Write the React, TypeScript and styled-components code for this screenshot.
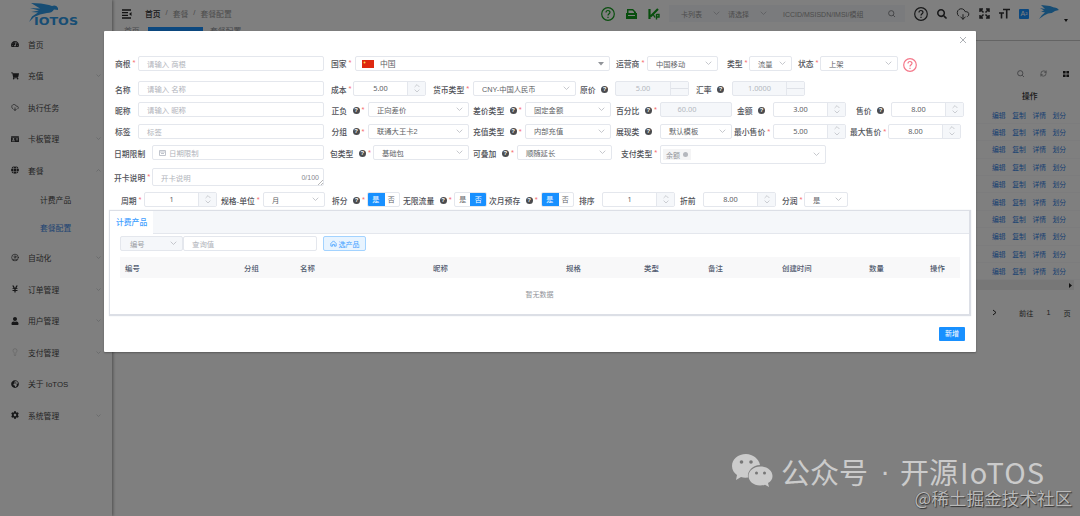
import React from "react";
import styled, { createGlobalStyle, css } from "styled-components";
import {
  FaTachometerAlt, FaShoppingCart, FaIdCard, FaYenSign, FaUser, FaGlobeAfrica, FaCog,
  FaSearch, FaGlobe,
} from "react-icons/fa";
import { CloudDownload, Lightbulb, RefreshCw, CircleUser } from "lucide-react";

const Global = createGlobalStyle`
  * { box-sizing: border-box; }
  body {
    margin: 0; width: 1080px; height: 516px; overflow: hidden; background: #fff;
    font-family: "Liberation Sans", "Noto Sans CJK SC", sans-serif; font-size: 7.8px; color: #303133;
  }
`;

const Page = styled.div`position: relative; display: flex; width: 1080px; height: 516px; overflow: hidden;`;

/* ---------- sidebar ---------- */
const Sidebar = styled.aside`
  width: 112px; height: 516px; flex: none; background: #fff; box-shadow: 1px 0 3px rgba(0, 0, 0, 0.4);
`;
const LogoBox = styled.div`height: 28.5px; padding: 1px 0 0 27px;`;
const MenuItem = styled.div`
  display: flex; align-items: center; height: 31.5px; padding: 0 11px; color: #484848;
  & > span { flex: 1; margin-left: 9px; white-space: nowrap; }
`;
const MenuIcon = styled.i<{ $faint?: boolean }>`
  display: flex; width: 8px; color: ${(p) => (p.$faint ? "#c4c4c4" : "#303133")};
`;
const SubItem = styled.div<{ $active?: boolean }>`
  height: 28px; line-height: 29px; padding-left: 40px; color: ${(p) => (p.$active ? "#3f88e6" : "#484848")};
`;

/* ---------- page behind the dialog ---------- */
const Main = styled.main`flex: 1; min-width: 0;`;
const TopBar = styled.header`display: flex; align-items: center; height: 27px; padding-left: 9px;`;
const Crumbs = styled.div`
  display: flex; gap: 5px; width: 456px; margin-left: 13px; color: #999; white-space: nowrap;
  & b { font-weight: 500; color: #303133; }
`;
const GreenIcons = styled.div`display: flex; align-items: center; gap: 11px; width: 68px; color: #119c1c;`;
const SearchGroup = styled.div`
  display: flex; align-items: center; width: 236px; height: 17px; background: #f5f7fa; color: #999;
  font-size: 7px; white-space: nowrap; overflow: hidden;
`;
const SearchPart = styled.span<{ $w: number; $l: number; $r: number }>`
  display: flex; align-items: center; justify-content: space-between; width: ${(p) => p.$w}px;
  padding: 0 ${(p) => p.$r}px 0 ${(p) => p.$l}px;
`;
const Tools = styled.div`
  display: flex; align-items: center; gap: 9px; margin-left: 9px; color: #303133;
  & > :nth-child(7) { margin: -4px 0 0 1px; }
  & > :nth-child(8) { margin: 13px 0 0 -4px; }
`;
const Translate = styled.span`
  width: 10px; height: 10px; border-radius: 1px; background: #1890ff; color: #fff; font-size: 7px; line-height: 10px; text-align: center;
`;
const PageTabs = styled.div`
  display: flex; height: 13.5px; border-bottom: 1px solid #c9c9c9; color: #909399; line-height: 9px;
  & span { width: 36px; padding-left: 12px; white-space: nowrap; }
  & b + span { padding-left: 7px; }
  & b { width: 55px; background: #1890ff; }
`;
const ListPanel = styled.section`width: 104px; margin-left: auto; padding-top: 27px;`;
const ListTools = styled.div`
  display: flex; justify-content: flex-end; gap: 16px; height: 12px; padding-right: 11px; align-items: center; color: #606266;
`;
const ListHead = styled.div`height: 27px; padding: 12px 0 0 46px; line-height: 10px; font-weight: 500;`;
const LinkRow = styled.div`
  display: flex; gap: 6.6px; height: 17.4px; align-items: center; padding-left: 16px; border-bottom: 1px solid #f8f9fb;
  color: #2f80e4; font-size: 6.8px; white-space: nowrap;
`;
const ScrollBar = styled.div`
  display: flex; align-items: center; justify-content: flex-end; height: 10px; margin-right: 6px; padding-right: 2px; background: #efefef;
`;
const Pager = styled.div`
  display: flex; align-items: center; height: 45px; padding-left: 16px; font-size: 7.2px; color: #404040;
  & span:nth-child(2) { margin-left: 22px; }
  & span:nth-child(3) { margin-left: 13px; }
  & span:nth-child(4) { margin-left: 13px; }
`;

/* ---------- dialog ---------- */
const Mask = styled.div`position: absolute; inset: 0; background: rgba(0, 0, 0, 0.5); padding: 31px 0 0 104px;`;
const Dialog = styled.div`
  width: 872px; height: 321px; background: #fff; border-radius: 1px; color: #303133; box-shadow: 0 1px 2px rgba(0, 0, 0, 0.3);
`;
const DialogTop = styled.div`display: flex; justify-content: flex-end; height: 22px; padding: 5px 9px 0 0;`;
const Row = styled.div<{ $h: number }>`display: flex; align-items: flex-start; height: ${(p) => p.$h}px;`;
const Field = styled.div<{ $gap: number }>`display: flex; flex: none; margin-left: ${(p) => p.$gap}px;`;
const Label = styled.label<{ $w: number }>`
  display: flex; align-items: center; flex: none; width: ${(p) => p.$w}px; height: 16px;
  font-weight: 500; color: #505258; white-space: nowrap;
`;
const TopRow = styled(Row)`
  & ${Label} { height: 20px; }
`;
const NoteRow = styled(Row)`
  & ${Label} { height: 18px; }
`;
const Star = styled.sup`margin-left: 2px; font-size: 7.5px; line-height: 6px; color: #f56c6c; vertical-align: baseline;`;
const Tip = styled.span`
  width: 7px; height: 7px; margin-left: 5.5px; border-radius: 50%; background: #4a4b4e; color: #fff;
  font: bold 6px/7px "Liberation Sans", sans-serif; text-align: center;
`;
const box = css`border: 1px solid #e4e7ed; border-radius: 2px; background: #fff;`;
const Input = styled.div<{ $w: number; $h?: number; $pad?: number }>`
  ${box}
  display: flex; align-items: center; gap: 3px; width: ${(p) => p.$w}px; height: ${(p) => p.$h ?? 15}px;
  padding-left: ${(p) => p.$pad ?? 8}px; color: #b0b3ba; font-size: 7.4px;
`;
const Select = styled.div<{ $w: number; $h?: number; $pad?: number; $off?: boolean }>`
  ${box}
  display: flex; align-items: center; justify-content: space-between; width: ${(p) => p.$w}px; height: ${(p) => p.$h ?? 15}px;
  padding: 0 5px 0 ${(p) => p.$pad ?? 8}px; color: #606266; font-size: 7.3px; white-space: nowrap;
  ${(p) => p.$off && css`background: #f5f7fa; color: #9a9da4;`}
`;
const NumberBox = styled.div<{ $w: number; $off?: boolean }>`
  ${box}
  display: flex; width: ${(p) => p.$w}px; height: 15px; color: ${(p) => (p.$off ? "#b4b8c0" : "#606266")};
  font: 7.4px/13px "Noto Sans", sans-serif; text-align: center; background: ${(p) => (p.$off ? "#f5f7fa" : "#fff")};
  & > span { flex: 1; }
`;
const Steps = styled.div<{ $off?: boolean }>`
  display: flex; flex-direction: column; align-items: center; justify-content: space-evenly; width: 18px;
  border-left: 1px solid #e4e7ed;
  background: ${(p) => (p.$off ? "linear-gradient(#f5f7fa 46%, #dfe2e8 46%, #dfe2e8 54%, #f5f7fa 54%)" : "#f5f7fa")};
`;
const Blank = styled.div`width: 18px;`;
const Toggle = styled.div`
  ${box}
  display: flex; width: 33px; height: 15px; overflow: hidden; font-size: 7px; line-height: 13px; text-align: center;
`;
const Choice = styled.span<{ $on?: boolean }>`
  flex: 1; margin: -1px; padding-top: 1px; color: ${(p) => (p.$on ? "#fff" : "#606266")}; background: ${(p) => (p.$on ? "#1890ff" : "transparent")};
`;
const Area = styled(Input)`
  position: relative; justify-content: space-between; padding-right: 4px;
  & em { font: 7px "Liberation Sans", sans-serif; color: #85888e; }
  & svg { position: absolute; right: 0; bottom: 0; }
`;
const Tag = styled.span`
  display: flex; align-items: center; gap: 3px; height: 11px; padding: 0 3px; background: #f4f4f5; color: #909399; font-size: 7px;
  & i { width: 5px; height: 5px; border-radius: 50%; background: #b4b7bd; }
`;
const Country = styled.span`display: flex; align-items: center; gap: 6px; font-size: 7.8px;`;
const Lowered = styled.div`padding-top: 3px;`;
const RedHelp = styled.div`margin: 5px 0 0 5px; color: #f4788a;`;

const Card = styled.section`
  width: 862px; height: 106px; margin-left: 5px; border: 1px solid #dcdfe6; border-width: 1px 2px 2px 1px; box-shadow: 0 0 1px #dcdfe6;
`;
const CardTabs = styled.div`
  height: 23px; background: #f5f7fa; border-bottom: 1px solid #e4e7ed;
  & span { display: block; width: 43px; height: 23px; padding-left: 6px; line-height: 23px; background: #fff; color: #409eff; font-weight: 500; }
`;
const Filter = styled.div`display: flex; padding: 2px 0 0 10px;`;
const Pick = styled.button`
  display: flex; align-items: center; justify-content: center; gap: 2px; width: 43px; height: 15px; margin-left: 6px; padding: 0;
  border: 1px solid #a3d3ff; border-radius: 2px; background: #e8f4ff; color: #409eff; font: inherit; font-size: 7px; white-space: nowrap;
`;
const TableHead = styled.div`
  display: grid; grid-template-columns: 119px 56px 133px 133px 78px 64px 74px 87px 61px 30px; align-items: center;
  width: 840px; height: 21px; margin: 6px 0 0 10px; padding-left: 5px; background: #f8f8f9; color: #515a6e;
  font-weight: 500; font-size: 7.4px;
`;
const Empty = styled.div`padding-top: 10px; text-align: center; font-size: 7px; line-height: 14px; color: #909399;`;
const Foot = styled.footer`display: flex; justify-content: flex-end; padding: 11px 11px 0 0;`;
const Submit = styled.button`
  width: 26px; height: 14px; padding: 0; border: 0; border-radius: 1px; background: #1890ff; color: #fff; font: inherit; font-size: 7px; line-height: 14px;
`;

/* ---------- watermark ---------- */
const Brand = styled.div`
  position: absolute; left: 732px; top: 451px; display: flex; align-items: center; color: #cbcbcb;
  font: 29px/40px "Noto Sans CJK SC", sans-serif; white-space: nowrap;
  & > svg { margin-right: 8px; }
  & i { width: 34px; text-align: center; font-style: normal; font-family: "Liberation Sans", sans-serif; margin-right: -2px; }
  & b { margin-left: 2px; font-weight: 400; letter-spacing: 1.1px; }
`;
const Credit = styled.div`
  position: absolute; right: 8px; top: 486px; color: #b9b9b9; font: 17.6px/24px "Noto Sans CJK SC", sans-serif;
  text-shadow: 1px 1px 1px #333, -0.5px -0.5px 0 #555; white-space: nowrap;
`;

const Chev = ({ up, s = 7 }: { up?: boolean; s?: number }) => (
  <svg width={s} height={s * 0.6} viewBox="0 0 10 6" fill="none" stroke="#b4b7bd" strokeWidth="1.1">
    <path d={up ? "M1 5L5 1L9 5" : "M1 1L5 5L9 1"} />
  </svg>
);
const Help = ({ s }: { s: number }) => (
  <svg width={s} height={s} viewBox="0 0 14 14" fill="none" stroke="currentColor" strokeWidth="1.2">
    <circle cx="7" cy="7" r="6.3" />
    <path d="M5 5.500C5 2.800 9 2.900 9 5.300C9 6.800 7 6.700 7 8.600M7 9.700V11" />
  </svg>
);
const Bird = () => (
  <svg width="20" height="15" viewBox="0 0 20 15" fill="#2f9ae8">
    <path d="M2 1L11 2L15 3.500Q18 3 20 6L16 7Q13 9.500 9 9.500L5 11.500L0 15L3 11L6 8.500L2 7.500L5 6.500L1 4L6 5Z" />
  </svg>
);
const Logo = () => (
  <svg width="54" height="26" viewBox="0 0 54 26">
    <path fill="#2f9ae8" d="M4 2L14 2.500L22 4L25 5Q29 3.500 31 7L31 9L27 8.500Q25 12 20 12L13 13.500L7 16L2 21L5 15.500L11 11.500L4 11L12 9.500L3 7L13 7.500Z" />
    <text x="7" y="24" fill="#2f9ae8" fontFamily="DejaVu Sans" fontWeight="bold" fontSize="10" textLength="44" lengthAdjust="spacingAndGlyphs">IOTOS</text>
  </svg>
);
const Lens = () => (
  <svg width="7" height="7" viewBox="0 0 8 8" fill="none" stroke="#707276" strokeWidth=".9"><circle cx="3.700" cy="3.700" r="3" /><path d="M6 6L8 8" /></svg>
);

const MENU: { t: string; icon: React.ReactNode; sub?: string[]; arrow?: boolean; faint?: boolean }[] = [
  { t: "首页", icon: <FaTachometerAlt size={8} /> },
  { t: "充值", icon: <FaShoppingCart size={8} />, arrow: true },
  { t: "执行任务", icon: <CloudDownload size={9} /> },
  { t: "卡板管理", icon: <FaIdCard size={8} />, arrow: true },
  { t: "套餐", icon: <FaGlobe size={8} />, arrow: true, sub: ["计费产品", "套餐配置"] },
  { t: "自动化", icon: <CircleUser size={9} />, arrow: true },
  { t: "订单管理", icon: <FaYenSign size={8} />, arrow: true },
  { t: "用户管理", icon: <FaUser size={8} />, arrow: true },
  { t: "支付管理", icon: <Lightbulb size={8} />, arrow: true, faint: true },
  { t: "关于 IoTOS", icon: <FaGlobeAfrica size={8} /> },
  { t: "系统管理", icon: <FaCog size={8} />, arrow: true },
];

type FProps = { gap: number; lw: number; label: string; tip?: boolean; req?: boolean; children: React.ReactNode };
const F = ({ gap, lw, label, tip, req, children }: FProps) => (
  <Field $gap={gap}>
    <Label $w={lw}>{label}{tip && <Tip>?</Tip>}{req && <Star>*</Star>}</Label>
    {children}
  </Field>
);
const Num = ({ w = 73, v, off, plain }: { w?: number; v: string; off?: boolean; plain?: boolean }) => (
  <NumberBox $w={w} $off={off}>
    <span>{v}</span>
    {plain ? <Blank /> : <Steps $off={off}>{!off && <><Chev up s={6} /><Chev s={6} /></>}</Steps>}
  </NumberBox>
);
const Sel = ({ w, v, pad }: { w: number; v: string; pad?: number }) => <Select $w={w} $pad={pad}>{v}<Chev /></Select>;
const YesNo = ({ yes }: { yes?: boolean }) => <Toggle><Choice $on={yes}>是</Choice><Choice $on={!yes}>否</Choice></Toggle>;

export default function App() {
  return (
    <Page>
      <Global />
      <Sidebar>
        <LogoBox><Logo /></LogoBox>
        {MENU.map((m) => (
          <React.Fragment key={m.t}>
            <MenuItem>
              <MenuIcon $faint={m.faint}>{m.icon}</MenuIcon>
              <span>{m.t}</span>
              {m.arrow && <Chev up={!!m.sub} s={5} />}
            </MenuItem>
            {m.sub?.map((s, i) => <SubItem key={s} $active={i === 1}>{s}</SubItem>)}
          </React.Fragment>
        ))}
      </Sidebar>
      <Main>
        <TopBar>
          <svg width="11" height="10" viewBox="0 0 11 10" fill="none" stroke="#222" strokeWidth="1.3">
            <path d="M1 1H10M1 3.700H7M1 6.300H7M1 9H10" /><path fill="#222" stroke="none" d="M10.500 3V7L8 5Z" />
          </svg>
          <Crumbs><b>首页</b><span>/</span><span>套餐</span><span>/</span><span>套餐配置</span></Crumbs>
          <GreenIcons>
            <Help s={14} />
            <svg width="11" height="12" viewBox="0 0 11 12" fill="currentColor"><path fillRule="evenodd" d="M1 1H7L10 4V5H11V11H0V5H1ZM2.500 2.500V5H8V4L6.500 2.500ZM2 7V8H9V7Z" /></svg>
            <svg width="12" height="12" viewBox="0 0 12 12" fill="none" stroke="currentColor" strokeWidth="2.200"><path d="M1.500 1V11M10 1L2.500 8.500" /><path strokeWidth="1.400" d="M5 6L7 9.500M8.500 6V11.500M8.500 6.500H11V9H8.500" /></svg>
          </GreenIcons>
          <SearchGroup>
            <SearchPart $w={54} $l={12} $r={3}>卡列表<Chev /></SearchPart>
            <SearchPart $w={47} $l={5} $r={3}>请选择<Chev /></SearchPart>
            <SearchPart $w={135} $l={13} $r={10}>ICCID/MSISDN/IMSI/模组<Lens /></SearchPart>
          </SearchGroup>
          <Tools>
            <Help s={14} />
            <FaSearch size={10} />
            <CloudDownload size={14} strokeWidth={1.6} />
            <svg width="11" height="11" viewBox="0 0 11 11" fill="none" stroke="currentColor" strokeWidth="1.5"><path d="M1 4V1H4M1 1L4.500 4.500M7 1H10V4M10 1L6.500 4.500M1 7V10H4M1 10L4.500 6.500M10 7V10H7M10 10L6.500 6.500" /></svg>
            <svg width="11" height="11" viewBox="0 0 11 11" fill="none" stroke="currentColor" strokeWidth="1.6"><path d="M4 1.500H11M7.700 1.500V10.500M0 5H5M2.500 5V10.500" /></svg>
            <Translate>A²</Translate>
            <Bird />
            <svg width="4" height="3"><path d="M0 0H4L2 3Z" fill="#222" /></svg>
          </Tools>
        </TopBar>
        <PageTabs><span>首页</span><b /><span>套餐配置</span></PageTabs>
        <ListPanel>
          <ListTools>
            <Lens />
            <RefreshCw size={7} />
            <svg width="6" height="6" fill="#222"><path d="M0 0H2.600V2.600H0ZM3.400 0H6V2.600H3.400ZM0 3.400H2.600V6H0ZM3.400 3.400H6V6H3.400Z" /></svg>
          </ListTools>
          <ListHead>操作</ListHead>
          {Array.from({ length: 10 }, (_, i) => (
            <LinkRow key={i}><span>编辑</span><span>复制</span><span>详情</span><span>划分</span></LinkRow>
          ))}
          <ScrollBar><svg width="3" height="5"><path d="M0 0L3 2.500L0 5Z" fill="#222" /></svg></ScrollBar>
          <Pager>
            <svg width="5" height="7" fill="none" stroke="#222"><path d="M1 1L4 3.500L1 6" /></svg>
            <span>前往</span><span>1</span><span>页</span>
          </Pager>
        </ListPanel>
      </Main>

      <Mask>
        <Dialog>
          <DialogTop><svg width="8" height="8" viewBox="0 0 8 8" stroke="#a4a7ad" strokeWidth=".9"><path d="M1 1L7 7M7 1L1 7" /></svg></DialogTop>
          <TopRow $h={28}>
            <F gap={11} lw={23} label="商根" req><Lowered><Input $w={186}>请输入 商根</Input></Lowered></F>
            <F gap={7} lw={24} label="国家" req>
              <Lowered>
                <Select $w={255} $pad={6}>
                  <Country>
                    <svg width="12" height="8"><rect width="12" height="8" fill="#de2910" /><circle cx="2.500" cy="2.500" r="1" fill="#ffd84a" /></svg>中国
                  </Country>
                  <svg width="6" height="4"><path d="M0 0H6L3 3.500Z" fill="#909398" /></svg>
                </Select>
              </Lowered>
            </F>
            <F gap={6} lw={31} label="运营商" req><Lowered><Sel w={71} v="中国移动" /></Lowered></F>
            <F gap={9} lw={22} label="类型" req><Lowered><Sel w={43} v="流量" /></Lowered></F>
            <F gap={6} lw={22} label="状态" req><Lowered><Sel w={78} v="上架" /></Lowered></F>
            <RedHelp><Help s={14} /></RedHelp>
          </TopRow>
          <Row $h={21}>
            <F gap={11} lw={23} label="名称"><Input $w={186}>请输入 名称</Input></F>
            <F gap={7} lw={22} label="成本" req><Num v="5.00" /></F>
            <F gap={7} lw={40} label="货币类型" req><Sel w={103} v="CNY-中国人民币" /></F>
            <F gap={4} lw={35} label="原价" tip><Num w={74} v="5.00" off /></F>
            <F gap={7} lw={36} label="汇率" tip><Num v="1.0000" off /></F>
          </Row>
          <Row $h={21.5}>
            <F gap={11} lw={23} label="昵称"><Input $w={186}>请输入 昵称</Input></F>
            <F gap={7.5} lw={36.5} label="正负" tip req><Sel w={101} v="正向差价" /></F>
            <F gap={4} lw={52} label="差价类型" tip req><Sel w={86} v="固定金额" /></F>
            <F gap={5} lw={44} label="百分比" tip req><Num w={72} v="60.00" off plain /></F>
            <F gap={5} lw={36} label="金额" tip><Num v="3.00" /></F>
            <F gap={10} lw={35} label="售价" tip><Num v="8.00" /></F>
          </Row>
          <Row $h={21.5}>
            <F gap={11} lw={23} label="标签"><Input $w={186}>标签</Input></F>
            <F gap={7.5} lw={36.5} label="分组" tip req><Sel w={101} v="联通大王卡2" /></F>
            <F gap={4} lw={52} label="充值类型" tip req><Sel w={86} v="内部充值" /></F>
            <F gap={5} lw={44} label="展现类" tip><Sel w={72} v="默认模板" /></F>
            <F gap={2} lw={39} label="最小售价" req><Num v="5.00" /></F>
            <F gap={4} lw={38} label="最大售价" req><Num v="8.00" /></F>
          </Row>
          <Row $h={23}>
            <F gap={10} lw={38} label="日期限制">
              <Input $w={172} $pad={6}>
                <svg width="7" height="7" fill="none" stroke="#c0c4cc"><path d="M.500 1.500H6.500V6.500H.500ZM0 3H7M2 4.500H5" /></svg>日期限制
              </Input>
            </F>
            <F gap={6} lw={43} label="包类型" tip req><Sel w={96} v="基础包" /></F>
            <F gap={4} lw={44} label="可叠加" tip req><Sel w={95} v="顺随延长" /></F>
            <F gap={9} lw={39} label="支付类型" req><Select $w={166} $h={19} $pad={2}><Tag>余额<i /></Tag><Chev /></Select></F>
          </Row>
          <NoteRow $h={24}>
            <F gap={10} lw={38} label="开卡说明" req>
              <Area $w={172} $h={18}><span>开卡说明</span><em>0/100</em>
                <svg width="5" height="5" stroke="#999" strokeWidth=".7"><path d="M0 5L5 0M3 5L5 3" /></svg>
              </Area>
            </F>
          </NoteRow>
          <Row $h={18}>
            <F gap={17} lw={23} label="周期" req><Num v="1" /></F>
            <F gap={4} lw={42} label="规格-单位" req><Sel w={62} v="月" /></F>
            <F gap={7} lw={35} label="拆分" tip req><YesNo yes /></F>
            <F gap={3} lw={51} label="无限流量" tip req><YesNo /></F>
            <F gap={2} lw={52} label="次月预存" tip req><YesNo yes /></F>
            <F gap={5} lw={23} label="排序"><Num v="1" /></F>
            <F gap={5} lw={23} label="折前"><Num v="8.00" /></F>
            <F gap={6} lw={22} label="分润" req><Sel w={44} v="是" /></F>
          </Row>
          <Card>
            <CardTabs><span>计费产品</span></CardTabs>
            <Filter>
              <Select $w={63} $off $pad={9}>编号<Chev /></Select>
              <Input $w={134} $pad={8}>查询值</Input>
              <Pick><svg width="7" height="7" viewBox="0 0 8 8" fill="none" stroke="#409eff" strokeWidth=".9"><path d="M1 7V4L4 1L7 4V7H5V5H3V7Z" /></svg>选产品</Pick>
            </Filter>
            <TableHead>
              {["编号", "分组", "名称", "昵称", "规格", "类型", "备注", "创建时间", "数量", "操作"].map((t) => <span key={t}>{t}</span>)}
            </TableHead>
            <Empty>暂无数据</Empty>
          </Card>
          <Foot><Submit>新增</Submit></Foot>
        </Dialog>
      </Mask>

      <Brand>
        <svg width="41" height="34" viewBox="0 0 41 34">
          <path fill="#cbcbcb" d="M14 0C6 0 0 5 0 12C0 16 2 19 5 21L4 26L9 23Q12 24 16 23.500C15 17 21 11 28 11C27 5 21 0 14 0Z" />
          <path fill="#cbcbcb" d="M28.500 12.500C21.500 12.500 16.500 17 16.500 22C16.500 27 21.500 31.500 28 31.500Q31 31.500 33 30.700L37 33L36 29C39 27.500 40.500 25 40.500 22C40.500 17 35.500 12.500 28.500 12.500Z" />
          <g fill="#777"><circle cx="9.500" cy="8" r="1.800" /><circle cx="19" cy="8" r="1.800" /><circle cx="24.500" cy="19" r="1.500" /><circle cx="32.500" cy="19" r="1.500" /></g>
        </svg>
        <span>公众号</span><i>·</i><span>开源</span><b>IoTOS</b>
      </Brand>
      <Credit>@稀土掘金技术社区</Credit>
    </Page>
  );
}
